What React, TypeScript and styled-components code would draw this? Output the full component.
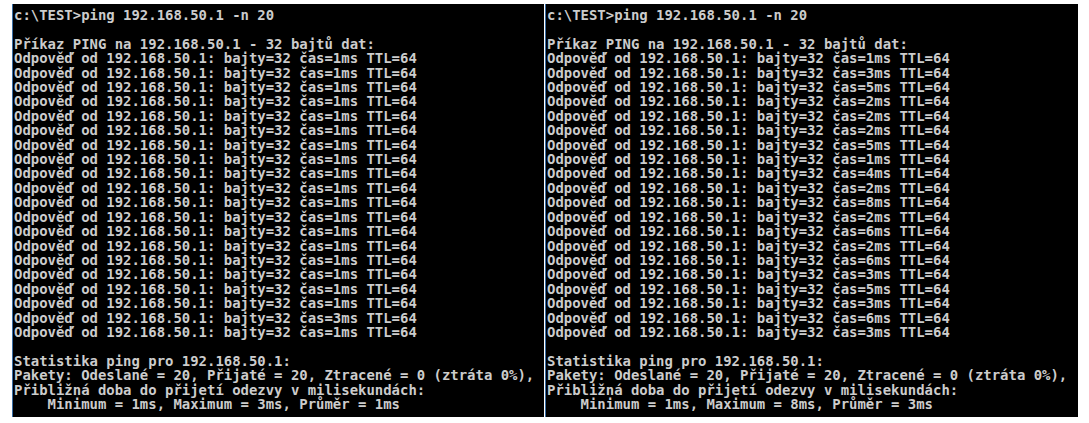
import React from "react";
import styled, { createGlobalStyle } from "styled-components";

const Global = createGlobalStyle`
  html, body { margin: 0; padding: 0; background: #ffffff; }
  #root { width: 1089px; height: 423px; }
`;

const Page = styled.div`
  display: flex;
  flex-direction: row;
  gap: 1px;
  padding: 4px 0 0 12px;
  height: 423px;
  box-sizing: border-box;
  background: #ffffff;
`;

const Console = styled.pre<{ $w: number }>`
  margin: 0;
  width: ${(p) => p.$w}px;
  height: 413px;
  box-sizing: border-box;
  background: #000000;
  border-left: 1px solid #3a6ea5;
  padding: 4px 0 0 1px;
  color: #cccccc;
  font-family: "DejaVu Sans Mono", "Liberation Mono", monospace;
  font-weight: bold;
  font-size: 13.95px;
  line-height: 14.4px;
  white-space: pre;
  overflow: hidden;
`;

function buildLog(times: number[], min: number, max: number, avg: number): string {
  const lines: string[] = [];
  lines.push("c:\\TEST>ping 192.168.50.1 -n 20");
  lines.push("");
  lines.push("Příkaz PING na 192.168.50.1 - 32 bajtů dat:");
  times.forEach((t) => {
    lines.push(`Odpověď od 192.168.50.1: bajty=32 čas=${t}ms TTL=64`);
  });
  lines.push("");
  lines.push("Statistika ping pro 192.168.50.1:");
  lines.push("Pakety: Odeslané = 20, Přijaté = 20, Ztracené = 0 (ztráta 0%),");
  lines.push("Přibližná doba do přijetí odezvy v milisekundách:");
  lines.push(`    Minimum = ${min}ms, Maximum = ${max}ms, Průměr = ${avg}ms`);
  return lines.join("\n");
}

const leftTimes = [1, 1, 1, 1, 1, 1, 1, 1, 1, 1, 1, 1, 1, 1, 1, 1, 1, 1, 3, 1];
const rightTimes = [1, 3, 5, 2, 2, 2, 5, 1, 4, 2, 8, 2, 6, 2, 6, 3, 5, 3, 6, 3];

export default function App() {
  return (
    <>
      <Global />
      <Page>
        <Console $w={532}>{buildLog(leftTimes, 1, 3, 1)}</Console>
        <Console $w={533}>{buildLog(rightTimes, 1, 8, 3)}</Console>
      </Page>
    </>
  );
}
